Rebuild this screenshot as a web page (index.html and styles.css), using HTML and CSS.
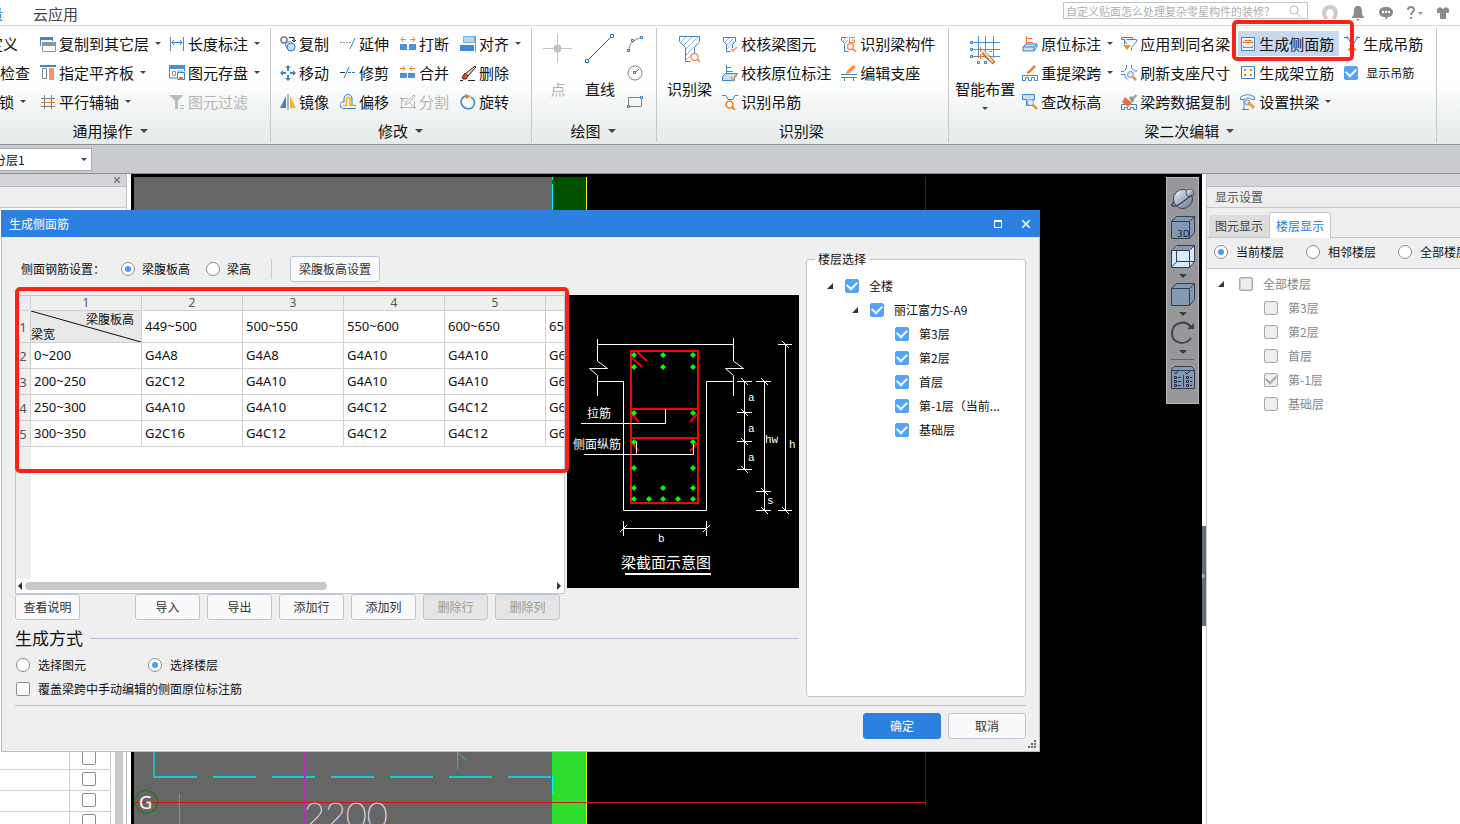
FILE: index.html
```html
<!DOCTYPE html>
<html lang="zh-CN">
<head>
<meta charset="utf-8">
<title>生成侧面筋</title>
<link rel="stylesheet" href="styles.css">
</head>
<body>
<header class="topbar">
  <nav class="tabs">
    <a class="tab tab-cut" href="#">量</a>
    <a class="tab" href="#">云应用</a>
  </nav>
  <div class="top-tools">
    <div class="search">
      <input class="search-input" type="text" aria-label="搜索" placeholder="自定义贴面怎么处理复杂零星构件的装修？">
      <svg width="12" height="12" viewBox="0 0 12 12" fill="none" stroke="#b9b9b9"><circle cx="5" cy="5" r="4"/><path d="M8 8l4 4"/></svg>
    </div>
    <button class="top-btn" aria-label="用户"><svg width="16" height="16" viewBox="0 0 16 16"><circle cx="8" cy="8" r="8" fill="#ccc"/><path d="M3 16c0-2 3-2 3-4-3-2-2-8 2-8s5 6 2 8c0 2 3 2 3 4z" fill="#fff"/></svg></button>
    <button class="top-btn" aria-label="通知"><svg width="14" height="16" viewBox="0 0 14 16" fill="#8c8c8c"><path d="M7 1c3 0 4 2 4 5 0 4 1 5 2 6v1H1v-1c1-1 2-2 2-6 0-3 1-5 4-5zM5 14h4l-2 2z"/></svg></button>
    <button class="top-btn" aria-label="消息"><svg width="16" height="16" viewBox="0 0 16 16"><path d="M8 2c4 0 7 2 7 5s-2 5-5 5l-2 3-1-3c-4 0-6-2-6-5s3-5 7-5z" fill="#8c8c8c"/><path d="M4 7h2M7 7h2M10 7h2" stroke="#fff" stroke-width="2"/></svg></button>
    <button class="top-btn" aria-label="帮助"><svg width="16" height="16" viewBox="0 0 16 16"><path d="M1 5c0-4 6-4 6 0 0 2-3 2-3 5M4 12v2" fill="none" stroke="#8c8c8c" stroke-width="2"/><path d="M11 7h5l-2.500 3z" fill="#999"/></svg></button>
    <button class="top-btn" aria-label="皮肤"><svg width="14" height="16" viewBox="0 0 14 16"><path d="M4 2l3 2 3-2 3 2v4h-3v6H4V8H1V4z" fill="#8c8c8c"/></svg></button>
  </div>
</header>

<section class="ribbon" aria-label="功能区">
  <div class="group group-general">
    <div class="group-body">
      <div class="col col-cut">
        <button class="item item-define">定义</button>
        <button class="item">检查</button>
        <button class="item item-lock">锁<i class="caret"></i></button>
      </div>
      <div class="col">
        <button class="item"><svg class="ico" viewBox="0 0 16 16"><path d="M.5 10V1.500h12V5" fill="#fff" stroke="#3c84cf"/><path d="M0 1h13v3H0z" fill="#3c84cf"/><path d="M2.500 6.500h13v9h-13z" fill="#fff" stroke="#8a97a0"/><path d="M2 6h14v4H2z" fill="#8a97a0"/></svg>复制到其它层<i class="caret"></i></button>
        <button class="item"><svg class="ico" viewBox="0 0 16 16"><path d="M0 1h16" stroke="#3c84cf" stroke-width="2"/><path d="M2.500 3.500h4v10h-4z" fill="#fff" stroke="#7c8890"/><path d="M9 3h5v12H9z" fill="#fb9266"/></svg>指定平齐板<i class="caret"></i></button>
        <button class="item"><svg class="ico" viewBox="0 0 16 16" stroke="#76838c" fill="none"><path d="M4.500 1v14M11.500 1v14M1 4.500h14M1 12.500h14"/><path d="M1 8.500h14" stroke="#ed7b24"/></svg>平行辅轴<i class="caret"></i></button>
      </div>
      <div class="col">
        <button class="item"><svg class="ico" viewBox="0 0 16 16"><path d="M1.500 1v14M14.500 1v14" stroke="#76838c"/><path d="M3 6.500h10M5 4L3 6.500 5 9M11 4l2 2.500L11 9" fill="none" stroke="#2c7ad0"/></svg>长度标注<i class="caret"></i></button>
        <button class="item"><svg class="ico" viewBox="0 0 16 16"><path d="M.5 1v12H8M15.500 1v5" fill="none" stroke="#3c84cf"/><path d="M0 0h16v4H0z" fill="#4c91dc"/><path d="M3.500 6.500h3v4h-3zM8 6h6" fill="none" stroke="#8d9aa3"/><path d="M8.500 7.500h7v7h-7z" fill="#fff" stroke="#3c84cf"/><path d="M10 12h4v3h-4z" fill="#ed6d24"/></svg>图元存盘<i class="caret"></i></button>
        <button class="item" disabled><svg class="ico" viewBox="0 0 16 16" fill="#bdbdbd"><path d="M0 1h14L9 7v8H6V7zM11 11h4v1h-4zM11 14h4v1h-4z"/></svg>图元过滤</button>
      </div>
    </div>
    <button class="group-label">通用操作<i class="caret caret-lg"></i></button>
  </div>

  <div class="group group-modify">
    <div class="group-body">
      <div class="col">
        <button class="item"><svg class="ico" viewBox="0 0 16 16" fill="none"><circle cx="4" cy="4" r="3" stroke="#777" stroke-width="1.500"/><path d="M9 1.500h5V5M12 4l2 2 2-2" stroke="#111"/><circle cx="9" cy="9" r="3.500" stroke="#3c84cf"/><circle cx="11" cy="11" r="4" fill="#bfe3f7" stroke="#2879c8"/></svg>复制</button>
        <button class="item"><svg class="ico" viewBox="0 0 16 16" fill="#3c84cf"><path d="M8 0l3 3H9v3H7V3H5zM8 16l3-3H9v-3H7v3H5zM0 8l3-3v2h3v2H3v2zM16 8l-3-3v2h-3v2h3v2z"/></svg>移动</button>
        <button class="item"><svg class="ico" viewBox="0 0 16 16"><path d="M6 2v12H0z" fill="#3c84cf"/><path d="M10 2v12h6z" fill="#fcb223"/><path d="M8 0v16" stroke="#6b7880"/></svg>镜像</button>
      </div>
      <div class="col">
        <button class="item"><svg class="ico" viewBox="0 0 16 16" fill="none"><path d="M0 6.500h12" stroke="#8795a0" stroke-dasharray="2 1"/><path d="M15 2l-5 11" stroke="#3c84cf"/></svg>延伸</button>
        <button class="item"><svg class="ico" viewBox="0 0 16 16" fill="none"><path d="M0 7.500h5" stroke="#333"/><path d="M9 2L4 13" stroke="#2879c8"/><path d="M8 7.500h8" stroke="#2879c8" stroke-dasharray="3 1"/></svg>修剪</button>
        <button class="item"><svg class="ico" viewBox="0 0 16 16" fill="none"><path d="M16 11.500h-4V5c0-6-8-6-8 0v3C0 8 0 10 .5 12c.5 2 1.500 2.500 3 2.500H16" stroke="#2879c8"/><path d="M3 11.500h3.500V5c0-2.500 3.500-2.500 3.500 0v6.500h5" stroke="#f6a81c" stroke-width="1.500"/></svg>偏移</button>
      </div>
      <div class="col">
        <button class="item"><svg class="ico" viewBox="0 0 16 16"><path d="M0 8h7v6H0zM9 8h7v6H9z" fill="#4c91dc"/><path d="M6 3.500H1M3 1L1 3.500 3 6M10 3.500h5M13 1l2 2.500L13 6" fill="none" stroke="#e98a1e"/></svg>打断</button>
        <button class="item"><svg class="ico" viewBox="0 0 16 16"><path d="M0 8h7v5H0zM8 8h7v5H8z" fill="#4c91dc"/><path d="M0 3.500h5M3 1l2 2.500L3 6M15 3.500h-5M12 1l-2 2.500L12 6" fill="none" stroke="#e98a1e"/></svg>合并</button>
        <button class="item" disabled><svg class="ico" viewBox="0 0 16 16" fill="none" stroke="#b5b5b5"><path d="M1.500 3v12M0 4.500h8M0 13.500h16M14.500 7v8M5 11l2-4 7-6 1 1-6 7zM2 5l3 3M10 9l4 4"/></svg>分割</button>
      </div>
      <div class="col">
        <button class="item"><svg class="ico" viewBox="0 0 16 16"><path d="M3.500.5h11v6h-11z" fill="#b6d5f6" stroke="#78abe2"/><path d="M0 9h14v6H0z" fill="#4088d8"/><path d="M15.500 0v16" stroke="#8d9aa3"/></svg>对齐<i class="caret"></i></button>
        <button class="item"><svg class="ico" viewBox="0 0 16 16"><path d="M15 1l1 1-8 9-3-2z" fill="#e8d5a0" stroke="#222"/><path d="M8 11l-2 3H3l-1-2 3-4z" fill="#d34b1c" stroke="#622"/><path d="M0 15.500h3M8 15.500h7" stroke="#222"/></svg>删除</button>
        <button class="item"><svg class="ico" viewBox="0 0 16 16"><path d="M6 2C1 3 0 8 2 11c3 5 10 5 12 0 1-3 0-6-3-8" fill="none" stroke="#3c84cf" stroke-width="1.500"/><path d="M5 0l6 2-5 3z" fill="#f07c20"/></svg>旋转</button>
      </div>
    </div>
    <button class="group-label">修改<i class="caret caret-lg"></i></button>
  </div>

  <div class="group group-draw">
    <div class="group-body">
      <button class="big" disabled><svg width="30" height="34" viewBox="0 0 30 34"><path d="M14.500 3v29M0 17.500h29" stroke="#c4c4c4"/><circle cx="14.500" cy="17.500" r="4" fill="#c4c4c4"/></svg>点</button>
      <button class="big"><svg width="30" height="34" viewBox="0 0 30 34"><path d="M3 29L26 6" stroke="#555"/><path d="M.5 28.500h3v3h-3zM25.500 3.500h3v3h-3z" fill="#fff" stroke="#2879c8"/></svg>直线</button>
      <div class="col col-shapes">
        <button class="item" aria-label="弧"><svg class="ico" viewBox="0 0 16 16" fill="none"><path d="M2 14C2 8 7 3 14 2" stroke="#76838c"/><path d="M.5 13.500h2v2h-2zM4.500 3.500h2v2h-2zM13.500.5h2v2h-2z" fill="#fff" stroke="#2879c8"/></svg></button>
        <button class="item" aria-label="圆"><svg class="ico" viewBox="0 0 16 16" fill="none"><circle cx="8" cy="8" r="7" stroke="#76838c"/><path d="M8 8l4-4" stroke="#2879c8"/><path d="M6.500 6.500h2v2h-2z" fill="#fff" stroke="#2879c8"/></svg></button>
        <button class="item" aria-label="矩形"><svg class="ico" viewBox="0 0 16 16" fill="none"><path d="M1.500 3.500h13v9h-13z" stroke="#76838c"/><path d="M.5 11.500h2v2h-2zM13.500 2.500h2v2h-2z" fill="#fff" stroke="#2879c8"/></svg></button>
      </div>
    </div>
    <button class="group-label">绘图<i class="caret caret-lg"></i></button>
  </div>

  <div class="group group-detect">
    <div class="group-body">
      <button class="big"><svg width="30" height="34" viewBox="0 0 30 34" fill="none"><path d="M4.500 5.500h20v5l-5 6V22M10.500 30.500v-14l-6-6v-5M10.500 30.500h5" stroke="#3c84cf"/><path d="M6 11l5-5M9 14l8-8M11 18L23 6M11 24l8-8M11 29l5-5" stroke="#8cb7e6"/><circle cx="19.500" cy="26" r="3.500" stroke="#fb9266" stroke-width="1.500"/><path d="M22 28l3 3" stroke="#fb9266" stroke-width="2"/></svg>识别梁</button>
      <div class="col">
        <button class="item"><svg class="ico" viewBox="0 0 16 16" fill="none"><path d="M1.500 1.500h12v4l-3 3V12M4.500 15.500V8.500l-3-3v-4M4.500 15.500h4" stroke="#3c84cf"/><path d="M3 6l4-4M5 9l6-6M5 13l7-8" stroke="#8cb7e6"/><path d="M9 13l2 2 4-4" stroke="#fb9266" stroke-width="1.500"/></svg>校核梁图元</button>
        <button class="item"><svg class="ico" viewBox="0 0 16 16"><path d="M4.500 0v9M5 2.500h4M5 6.500h6" stroke="#3c84cf" fill="none"/><path d="M.5 11.500l3-3h12l-3 3v4H.5z" fill="#c9dff6" stroke="#3c84cf"/><path d="M9 12l2 3 4-5" fill="none" stroke="#fb9266" stroke-width="1.500"/></svg>校核原位标注</button>
        <button class="item"><svg class="ico" viewBox="0 0 16 16" fill="none"><path d="M0 1.500h4l2 4h5l2-4h3" stroke="#3c84cf"/><circle cx="7.500" cy="10.500" r="3.500" stroke="#f57e20" stroke-width="1.500"/><path d="M10 13l3 3" stroke="#f57e20" stroke-width="2"/></svg>识别吊筋</button>
      </div>
      <div class="col">
        <button class="item"><svg class="ico" viewBox="0 0 16 16" fill="none"><path d="M.5 1.500h6M3.500 15.500V7.500l-3-3v-3M3.500 15.500h4" stroke="#3c84cf"/><path d="M2 5l4-4M3 9l4-5" stroke="#8cb7e6"/><path d="M14 1.500H8.500v5h5V4H11" stroke="#f57e20"/><circle cx="9.500" cy="10.500" r="3" stroke="#fb9266" stroke-width="1.500"/><path d="M12 13l3 3" stroke="#fb9266" stroke-width="2"/></svg>识别梁构件</button>
        <button class="item"><svg class="ico" viewBox="0 0 16 16"><path d="M0 9.500h16M0 12.500h16M3.500 12v4M12.500 12v4" stroke="#3c84cf"/><path d="M12 0l3 2-6 6-4 1 1-3z" fill="#fb9248"/></svg>编辑支座</button>
      </div>
    </div>
    <div class="group-label">识别梁</div>
  </div>

  <div class="group group-secondary">
    <div class="group-body">
      <button class="big"><svg width="30" height="34" viewBox="0 0 30 34" fill="none"><path d="M8.500 5v22M15.500 5v22M23.500 5v22M2 11.500h28M2 18.500h28M2 25.500h28" stroke="#4c91dc"/><path d="M.5 10.500h2v2h-2zM.5 17.500h2v2h-2zM.5 24.500h2v2h-2zM7.500 30.500h2v2h-2zM14.500 30.500h2v2h-2z" fill="#fff" stroke="#2879c8"/><path d="M13 21l11 11" stroke="#bd692e" stroke-width="4"/><path d="M13 20l10 11" stroke="#ffd9a6" stroke-width="2"/><path d="M10.500 16v5M8 18.500h5M10.500 23v5M8 25.500h5M19 20.500h3" stroke="#ed6d24"/></svg>智能布置<i class="caret"></i></button>
      <div class="col">
        <button class="item"><svg class="ico" viewBox="0 0 16 16" fill="none"><path d="M4.500 0v9M5 2.500h5M5 6.500h6" stroke="#f0712b"/><path d="M1 11l3-3h11v3l-3 4H1z" fill="#c9dff6" stroke="#3c84cf"/><path d="M1 11h11v4M12 11l3-3" stroke="#3c84cf"/></svg>原位标注<i class="caret"></i></button>
        <button class="item"><svg class="ico" viewBox="0 0 16 16" fill="none"><path d="M.5 15.500v-5h15v5h-3v-3h-3v3h-3v-3h-3v3z" stroke="#3c84cf"/><path d="M13 1L7 7l-2 1" stroke="#f57e20" stroke-width="2.500"/></svg>重提梁跨<i class="caret"></i></button>
        <button class="item"><svg class="ico" viewBox="0 0 16 16"><path d="M.5.5h12v5h-2v6h-6v-6h-4z" fill="#c9dff6" stroke="#3c84cf"/><circle cx="8.500" cy="8.500" r="3" fill="#e8f1fb" stroke="#7494ca"/><path d="M11 11l4 4" stroke="#ed941d" stroke-width="2.500"/></svg>查改标高</button>
      </div>
      <div class="col">
        <button class="item"><svg class="ico" viewBox="0 0 16 16" fill="none"><path d="M3.500 3.500h-3v-2h11v2M3.500 3.500v5M5.500 3.500h10v2l-5 6v3M3 4l3 4" stroke="#3c84cf"/><path d="M2 9h8l-4 5z" fill="#f19621"/></svg>应用到同名梁</button>
        <button class="item"><svg class="ico" viewBox="0 0 16 16" fill="none"><path d="M5.500 0v3l-2 3M10.500 0v3l3 3H16M0 9.500h4v2l2 3M0 6.500h3" stroke="#3c84cf"/><circle cx="9.500" cy="9.500" r="3" fill="#dce9fb" stroke="#6388c6"/><path d="M12 12l3 3" stroke="#ed941d" stroke-width="2.500"/></svg>刷新支座尺寸</button>
        <button class="item"><svg class="ico" viewBox="0 0 16 16"><path d="M.5 15.500v-5h15v5h-3v-2h-3v2h-3v-2h-3v2z" fill="none" stroke="#3c84cf"/><path d="M4 3l7 6-4 4-6-5z" fill="#ef702a"/><path d="M8 4l2-2 2 1 3-3 1 2-3 3v2l-2 2z" fill="#8c9ba6"/></svg>梁跨数据复制</button>
      </div>
      <div class="col">
        <div class="marked">
          <button class="item item-active"><svg class="ico" viewBox="0 0 16 16" fill="none"><path d="M1.500 1.500h13v13h-13z" fill="#eef4fb" stroke="#3c84cf"/><path d="M3 6.500l2-2h6l2 2M3 6.500h10M3 11.500h10M3 9.500l1 2M13 9.500l-1 2" stroke="#f06b2a"/></svg>生成侧面筋</button>
          <span class="mark mark-button"></span>
        </div>
        <button class="item"><svg class="ico" viewBox="0 0 16 16"><path d="M1.500 1.500h13v12h-13z" fill="#fff" stroke="#3c84cf"/><path d="M4 4h2v2H4zM10 4h2v2h-2zM4 9h2v2H4zM10 9h2v2h-2z" fill="#f06b2a"/></svg>生成架立筋</button>
        <button class="item"><svg class="ico" viewBox="0 0 16 16" fill="none"><path d="M.5 5.500V3c4-3 10-3 14 0v2.500h-3c-2-2-5-2-7 0zM4 6v9.500M2 15.500h7" stroke="#3c84cf"/><circle cx="7.500" cy="8.500" r="2.500" stroke="#6388c6"/><path d="M8 8l6 6" stroke="#e3a23c" stroke-width="3"/></svg>设置拱梁<i class="caret"></i></button>
      </div>
      <div class="col">
        <button class="item"><svg class="ico" viewBox="0 0 16 16" fill="none"><path d="M0 1.500h4l3 6h3l3-6h3M3 0v3M13 0v3" stroke="#3c84cf"/><path d="M8 9v4M4 14h8l-4-4z" stroke="#f06b2a" fill="#f5853e"/></svg>生成吊筋</button>
        <label class="item item-check"><input class="check" type="checkbox" checked>显示吊筋</label>
      </div>
    </div>
    <button class="group-label">梁二次编辑<i class="caret caret-lg"></i></button>
  </div>
</section>

<div class="strip">
  <div class="layer">
    <select class="layer-select" aria-label="分层"><option>分层1</option></select>
    <i class="caret"></i>
  </div>
</div>

<main class="workspace">
  <aside class="left-panel">
    <div class="panel-cap"><button class="panel-close" aria-label="关闭"><svg width="6" height="6" viewBox="0 0 6 6"><path d="M0 0l6 6M6 0L0 6" stroke="#777" stroke-width="1.500"/></svg></button></div>
    <div class="panel-tools"></div>
    <div class="props-wrap">
      <table class="props">
        <tr><td></td><td><input class="check" type="checkbox" aria-label="附加1"></td></tr>
        <tr><td></td><td><input class="check" type="checkbox" aria-label="附加2"></td></tr>
        <tr><td></td><td><input class="check" type="checkbox" aria-label="附加3"></td></tr>
        <tr><td></td><td><input class="check" type="checkbox" aria-label="附加4"></td></tr>
      </table>
      <div class="props-scroll"></div>
    </div>
  </aside>

  <section class="canvas" aria-label="绘图区">
    <svg class="drawing" width="1071" height="650" viewBox="0 0 1071 650" fill="none">
      <path d="M3 3h418v647H3z" fill="#666"/>
      <path d="M421 3h34v400h-34z" fill="#005000"/>
      <path d="M421 403h34v247h-34z" fill="#2cdf2c"/>
      <path d="M421.500 3v3M421.500 10v26M421.500 602v18" stroke="#00f6f6"/>
      <path d="M455.500 3v647" stroke="#fff000"/>
      <path d="M794.500 3v629" stroke="#8b0000"/>
      <path d="M23 500v104" stroke="#2cb4b8" stroke-width="2"/>
      <path d="M23 603h398" stroke="#23c3c9" stroke-width="2" stroke-dasharray="43 16"/>
      <path d="M174 500v150" stroke="#b030b8" stroke-width="2"/>
      <path d="M326.500 570v25M327 579l8 7M48.500 620v30" stroke="#22d622"/>
      <path d="M3 628.500h792" stroke="#d01414"/>
      <path d="M15 616l8 3 4 8-3 9-9 4-8-4-4-9 4-8z" stroke="#117a11"/>
      <text class="axis-text" x="8" y="635">G</text>
      <text class="dim-text" x="173" y="654">2200</text>
    </svg>
    <div class="palette">
      <button class="pal" aria-label="动态观察"><svg width="24" height="24" viewBox="0 0 24 24"><defs><linearGradient id="ball" x2="1" y2="1"><stop stop-color="#f4f7fa"/><stop offset="1" stop-color="#5a7290"/></linearGradient></defs><circle cx="12" cy="12" r="9.500" fill="url(#ball)" stroke="#3b4858"/><circle cx="19" cy="6" r="4" fill="url(#ball)" stroke="#506276"/><path d="M3 15c-5 4 0 6 6 2L21 8" fill="none" stroke="#3b4858" stroke-width="1.500"/></svg></button>
      <button class="pal" aria-label="三维"><svg width="24" height="24" viewBox="0 0 24 24"><path d="M.5 5.500l5-5h18v16l-5 6H.5z" fill="#8398b2" stroke="#333e4d"/><path d="M.5 5.500h18v17M18.500 5.500l5-5" fill="none" stroke="#333e4d"/><text class="pal-text" x="6" y="21">3D</text></svg></button>
      <button class="pal" aria-label="线框"><svg width="24" height="24" viewBox="0 0 24 24"><path d="M.5 5.500l5-5h18v16l-5 6H.5z" fill="#d6eafc" stroke="#333e4d"/><path d="M1 5l5-4h17l-5 4z" fill="#8398b2"/><path d="M.5 5.500h18v17M18.500 5.500l5-5M5.500 5v12l-5 5M5.500 16.500h18" fill="none" stroke="#333e4d"/></svg></button>
      <i class="caret caret-lg"></i>
      <button class="pal" aria-label="视图"><svg width="24" height="24" viewBox="0 0 24 24"><path d="M.5 5.500l5-5h18v16l-5 6H.5z" fill="#8398b2" stroke="#333e4d"/><path d="M.5 5.500h18v17M18.500 5.500l5-5" fill="none" stroke="#333e4d"/></svg></button>
      <i class="caret caret-lg"></i>
      <button class="pal" aria-label="旋转视图"><svg width="24" height="24" viewBox="0 0 24 24"><path d="M20 6C14-2 1 2 1 12c0 11 14 13 19 5" fill="none" stroke="#3b4654" stroke-width="2"/><path d="M16 8h7V2z" fill="#3b4654"/></svg></button>
      <i class="caret caret-lg"></i>
      <hr class="pal-rule">
      <button class="pal" aria-label="显示设置"><svg width="24" height="24" viewBox="0 0 24 24"><path d="M.5 3.500l3-3h17l3 3v19H.5z" fill="#8398b2" stroke="#333e4d"/><path d="M0 4.500h24M12.500 9v12" stroke="#333e4d"/><path d="M3 6l2 2 2-3M14 6l2 2 3-3M3.500 10.500h2v2h-2zM3.500 14.500h2v2h-2zM3.500 18.500h2v2h-2zM15.500 10.500h2v2h-2zM15.500 14.500h2v2h-2zM15.500 18.500h2v2h-2zM7 11.500h3M7 15.500h3M7 19.500h3M19 11.500h2M19 15.500h2M19 19.500h2" fill="none" stroke="#222b36"/></svg></button>
    </div>
  </section>

  <div class="splitter"><button class="splitter-grip" aria-label="收起面板"></button></div>

  <aside class="right-panel">
    <div class="panel-cap"></div>
    <h2 class="panel-title">显示设置</h2>
    <div class="panel-tabs">
      <button class="panel-tab">图元显示</button>
      <button class="panel-tab panel-tab-on">楼层显示</button>
    </div>
    <div class="floor-scope">
      <label class="opt"><input class="radio" type="radio" name="scope" checked>当前楼层</label>
      <label class="opt"><input class="radio" type="radio" name="scope">相邻楼层</label>
      <label class="opt"><input class="radio" type="radio" name="scope">全部楼层</label>
    </div>
    <ul class="tree tree-muted">
      <li><i class="twisty"></i><label class="opt"><input class="check check-partial" type="checkbox" disabled>全部楼层</label>
        <ul>
          <li><label class="opt"><input class="check" type="checkbox" disabled>第3层</label></li>
          <li><label class="opt"><input class="check" type="checkbox" disabled>第2层</label></li>
          <li><label class="opt"><input class="check" type="checkbox" disabled>首层</label></li>
          <li><label class="opt"><input class="check" type="checkbox" checked disabled>第-1层</label></li>
          <li><label class="opt"><input class="check" type="checkbox" disabled>基础层</label></li>
        </ul>
      </li>
    </ul>
  </aside>
</main>

<section class="dialog" role="dialog" aria-labelledby="dialog-title">
  <header class="dialog-bar">
    <h1 class="dialog-title" id="dialog-title">生成侧面筋</h1>
    <button class="win-btn" aria-label="最大化"><svg width="8" height="8" viewBox="0 0 8 8"><path d="M.5 1v6.500h7V1" fill="none" stroke="#fff"/><path d="M0 1h8" stroke="#fff" stroke-width="2"/></svg></button>
    <button class="win-btn" aria-label="关闭"><svg width="8" height="8" viewBox="0 0 8 8"><path d="M0 0l8 8M8 0L0 8" stroke="#fff" stroke-width="1.500"/></svg></button>
  </header>
  <div class="dialog-body">
    <div class="dialog-cols">
      <div class="dialog-main">
        <div class="settings">
          <span class="settings-name">侧面钢筋设置：</span>
          <label class="opt"><input class="radio" type="radio" name="basis" checked>梁腹板高</label>
          <label class="opt"><input class="radio" type="radio" name="basis">梁高</label>
          <span class="rule-v"></span>
          <button class="btn btn-wide">梁腹板高设置</button>
        </div>
        <div class="sheet-row">
          <div class="sheet">
            <div class="sheet-view">
              <table class="grid">
                <colgroup><col class="c-num"><col class="c-first"><col class="c-val"><col class="c-val"><col class="c-val"><col class="c-val"><col class="c-val"></colgroup>
                <thead><tr><th class="corner"></th><th>1</th><th>2</th><th>3</th><th>4</th><th>5</th><th></th></tr></thead>
                <tbody>
                  <tr class="tall"><th>1</th><td class="diag"><svg class="diag-line" viewBox="0 0 110 31" preserveAspectRatio="none"><path d="M0 0l110 31" stroke="#111"/></svg><div class="diag-top">梁腹板高</div><div class="diag-bottom">梁宽</div></td><td>449~500</td><td>500~550</td><td>550~600</td><td>600~650</td><td>650~700</td></tr>
                  <tr><th>2</th><td>0~200</td><td>G4A8</td><td>G4A8</td><td>G4A10</td><td>G4A10</td><td>G6A10</td></tr>
                  <tr><th>3</th><td>200~250</td><td>G2C12</td><td>G4A10</td><td>G4A10</td><td>G4A10</td><td>G6A10</td></tr>
                  <tr><th>4</th><td>250~300</td><td>G4A10</td><td>G4A10</td><td>G4C12</td><td>G4C12</td><td>G6C12</td></tr>
                  <tr><th>5</th><td>300~350</td><td>G2C16</td><td>G4C12</td><td>G4C12</td><td>G4C12</td><td>G6C12</td></tr>
                </tbody>
              </table>
            </div>
            <div class="hscroll"><i class="arrow-l"></i><div class="hscroll-track"><div class="hscroll-thumb"></div></div><i class="arrow-r"></i></div>
            <span class="mark mark-sheet"></span>
          </div>
          <svg class="diagram" width="232" height="293" viewBox="0 0 232 293" fill="none" role="img" aria-label="梁截面示意图">
            <defs><marker id="bar" markerWidth="6" markerHeight="6" refX="3" refY="3" markerUnits="userSpaceOnUse"><path d="M3 0l3 3-3 3-3-3z" fill="#0f0"/></marker></defs>
            <path d="M0 0h232v293H0z" fill="#000"/>
            <g stroke="#fff">
              <path d="M30.500 44v22l10 7.500h-18l8 7V101M166.500 43v23l10 7.500h-18l8 7V101M30 49.500h136M30 86.500h26.500v129h83v-129H166"/>
              <path d="M177.500 86v89M170 86.500h15M170 117.500h15M170 146.500h15M170 174.500h15M197.500 86v130M189 86.500h15M189 196.500h15M189 215.500h15M218.500 49v167M211 49.500h14M211 215.500h14M56 233.500h84M56.500 226v15M139.500 226v15"/>
              <path d="M174 83l7 7M174 114l7 7M174 143l7 7M174 171l7 7M194 83l7 7M194 193l7 7M194 212l7 7M215 46l7 7M215 212l7 7M53 237l7-7M136 237l7-7"/>
            </g>
            <path d="M64 56h67v152H64zM64 114h67M64 143h67M70 57l10 9M65 63l10 9M65 119l7 8M130 119l-7 8M65 148l7 8M130 148l-7 8" stroke="#f00" stroke-width="2"/>
            <path d="M14 128.500h84.500V114M17 159.500h109.500V147M69.500 159v-13" stroke="#fff"/>
            <path class="bars" d="M67 60L96 60 126 60 126 72 96 72 67 72 67 118 126 118 126 147 67 147 67 173 126 173 126 193 96 193 67 193 67 204 82 204 96 204 111 204 126 204"/>
            <path d="M58 279h86" stroke="#fff" stroke-width="2"/>
            <g class="cad-text">
              <text x="20" y="123">拉筋</text><text x="6" y="154">侧面纵筋</text>
              <text class="cad-letter" x="181" y="106">a</text><text class="cad-letter" x="181" y="137">a</text><text class="cad-letter" x="181" y="166">a</text>
              <text class="cad-letter" x="198" y="148">hw</text><text class="cad-letter" x="222" y="153">h</text><text class="cad-letter" x="200" y="209">s</text><text class="cad-letter" x="91" y="247">b</text>
              <text class="cad-title" x="54" y="273">梁截面示意图</text>
            </g>
          </svg>
        </div>
        <div class="sheet-actions">
          <button class="btn btn-help">查看说明</button>
          <button class="btn">导入</button>
          <button class="btn">导出</button>
          <button class="btn">添加行</button>
          <button class="btn">添加列</button>
          <button class="btn" disabled>删除行</button>
          <button class="btn" disabled>删除列</button>
        </div>
        <h2 class="section-title">生成方式</h2>
        <div class="modes">
          <label class="opt"><input class="radio" type="radio" name="mode">选择图元</label>
          <label class="opt"><input class="radio" type="radio" name="mode" checked>选择楼层</label>
        </div>
        <div class="modes"><label class="opt"><input class="check" type="checkbox">覆盖梁跨中手动编辑的侧面原位标注筋</label></div>
      </div>
      <fieldset class="floors">
        <legend>楼层选择</legend>
        <ul class="tree">
          <li><i class="twisty"></i><label class="opt"><input class="check" type="checkbox" checked>全楼</label>
            <ul>
              <li><i class="twisty"></i><label class="opt"><input class="check" type="checkbox" checked>丽江富力S-A9</label>
                <ul>
                  <li><label class="opt"><input class="check" type="checkbox" checked>第3层</label></li>
                  <li><label class="opt"><input class="check" type="checkbox" checked>第2层</label></li>
                  <li><label class="opt"><input class="check" type="checkbox" checked>首层</label></li>
                  <li><label class="opt"><input class="check" type="checkbox" checked>第-1层（当前...</label></li>
                  <li><label class="opt"><input class="check" type="checkbox" checked>基础层</label></li>
                </ul>
              </li>
            </ul>
          </li>
        </ul>
      </fieldset>
    </div>
    <footer class="dialog-foot">
      <button class="btn btn-foot btn-primary">确定</button>
      <button class="btn btn-foot">取消</button>
    </footer>
  </div>
  <svg class="grip" width="8" height="8" viewBox="0 0 8 8" fill="#666d76"><path d="M6 0h2v2H6zM3 3h2v2H3zM6 3h2v2H6zM0 6h2v2H0zM3 6h2v2H3zM6 6h2v2H6z"/></svg>
</section>
</body>
</html>
```

FILE: styles.css
```css
* { box-sizing: border-box; }
html, body { height: 100%; }
body {
  margin: 0;
  display: flex;
  flex-direction: column;
  position: relative;
  overflow: hidden;
  background: #fff;
  color: #111;
  font: 12px/16px "Noto Sans CJK SC", "Noto Sans", sans-serif;
}
button, input, select { font: inherit; color: inherit; margin: 0; }
button { background: none; border: 0; padding: 0; white-space: nowrap; }
svg { display: block; flex: none; }
ul { list-style: none; margin: 0; padding: 0; }
h1, h2 { margin: 0; font-size: 12px; font-weight: 400; }

.caret {
  flex: none;
  width: 0;
  height: 0;
  border: 3px solid transparent;
  border-top-color: #444;
  border-bottom: 0;
}
.caret-lg { border-width: 4px 4px 0; }

/* form controls */
.check, .radio {
  appearance: none;
  flex: none;
  width: 14px;
  height: 14px;
  border: 1px solid #8c8c8c;
  border-radius: 2px;
  background: #fff;
  display: grid;
  place-items: center;
}
.radio { border-radius: 50%; }
.radio:checked::before {
  content: "";
  width: 6px;
  height: 6px;
  border-radius: 50%;
  background: #4a9cf8;
}
.check:checked { background: #55a2fa; border-color: #55a2fa; }
.check:checked::before {
  content: "";
  width: 8px;
  height: 5px;
  margin-bottom: 3px;
  border: solid #fff;
  border-width: 0 0 2px 2px;
  transform: rotate(-45deg);
}
.check:disabled { background: #eee; border-color: #aaa; }
.check:disabled:checked::before { border-color: #aaa; }
.check-partial::before { content: ""; width: 10px; height: 10px; border: 1px solid #ccc; }
.opt { display: flex; align-items: center; gap: 8px; white-space: nowrap; }

/* top bar */
.topbar {
  flex: none;
  height: 26px;
  display: flex;
  justify-content: space-between;
  border-bottom: 1px solid #d8d8d8;
}
.tabs { display: flex; gap: 30px; margin-left: -12px; }
.tab { color: #444; text-decoration: none; font-size: 15px; line-height: 28px; }
.tab-cut { color: #2c6ba8; }
.top-tools { display: flex; align-items: flex-start; gap: 13px; padding: 2px 10px 0 0; }
.search {
  width: 245px;
  height: 17px;
  margin-right: 1px;
  display: flex;
  align-items: center;
  padding: 0 6px 0 2px;
  border: 1px solid #c4c4c4;
}
.search-input { flex: 1; min-width: 0; border: 0; padding: 0; height: 15px; font-size: 11px; background: none; }
.search-input::placeholder { color: #b0b0b0; }
.top-btn { padding-top: 3px; }

/* ribbon */
.ribbon {
  flex: none;
  display: flex;
  height: 119px;
  margin-left: -50px;
  background: linear-gradient(#fff 45%, #e5eaea);
  border-bottom: 1px solid #8c8f94;
  font-size: 15px;
}
.group {
  display: flex;
  flex-direction: column;
  align-items: center;
  margin: 2px 0;
  padding-top: 3px;
  border-right: 1px solid #c6c9cb;
}
.group-body { display: flex; flex: 1; }
.col { display: flex; flex-direction: column; }
.item { display: flex; align-items: center; gap: 3px; height: 25px; margin-bottom: 4px; line-height: 25px; white-space: nowrap; }
.item .caret { margin-left: 3px; }
.item:disabled, .big:disabled { color: #b5b5b5; }
.ico { width: 16px; height: 16px; }
.item-check { font-size: 12px; gap: 8px; }
.item-active { background: #c8d8ee; padding: 0 5px 0 2px; margin-left: -2px; margin-right: -5px; }
.big { display: flex; flex-direction: column; align-items: center; height: 87px; line-height: 23px; }
.big svg { margin-bottom: 12px; }
.big .caret { margin-top: 7px; }
.group-label { display: flex; align-items: center; gap: 7px; height: 26px; line-height: 26px; }
.group-general { padding-right: 10px; }
.group-general .group-body { gap: 8px; }
.group-general .col-cut { width: 80px; align-items: flex-end; margin-right: 2px; }
.group-general .group-label { margin-left: 10px; }
.item-define { margin-right: 12px; }
.item-lock { margin-right: 4px; }
.group-modify { padding-left: 9px; padding-right: 10px; }
.group-modify .group-body { gap: 11px; }
.group-draw { padding-left: 11px; padding-right: 13px; }
.group-draw .group-body { gap: 12px; }
.group-detect { padding-left: 10px; padding-right: 13px; }
.group-detect .group-body { gap: 10px; }
.group-secondary { padding-left: 6px; padding-right: 13px; }
.group-secondary .group-body { gap: 8px; }
.group-secondary .big { margin-right: -1px; }
.group-secondary .col:nth-child(4), .group-secondary .col:nth-child(5) { margin-left: 2px; }
.marked { position: relative; }
.mark { position: absolute; border: 4px solid #ff2117; border-radius: 5px; pointer-events: none; z-index: 5; }
.mark-button { left: -8px; right: -20px; top: -11px; height: 41px; }

/* strip under ribbon */
.strip { flex: none; height: 29px; padding-top: 3px; background: #c9cbd0; border-bottom: 1px solid #8c8f94; }
.layer { position: relative; width: 92px; }
.layer-select {
  appearance: none;
  width: 100%;
  height: 23px;
  padding: 0;
  text-indent: -6px;
  border: 1px solid #a9abae;
  border-left: 0;
  border-radius: 0;
  background: #fff;
}
.layer .caret { position: absolute; right: 5px; top: 10px; }

/* workspace */
.workspace { flex: 1; min-height: 0; display: flex; }
.left-panel {
  flex: none;
  width: 127px;
  display: flex;
  flex-direction: column;
  border-right: 1px solid #c0c3ca;
  margin-right: 4px;
}
.panel-cap { flex: none; height: 13px; display: flex; justify-content: flex-end; padding-right: 6px; background: #d3d5da; border-bottom: 1px solid #bfc2c9; }
.panel-tools { flex: none; height: 21px; background: #eee; border-bottom: 1px solid #c8cbd0; }
.props-wrap { flex: 1; min-height: 0; display: flex; align-items: flex-end; gap: 4px; margin-top: 4px; overflow: hidden; }
.props { width: 111px; border-spacing: 0; margin-bottom: -9px; }
.props td { height: 21px; padding: 0; border-right: 1px solid #d0d0d0; border-bottom: 1px solid #d0d0d0; }
.props td:last-child { width: 41px; padding: 0 0 2px 12px; }
.props-scroll { width: 8px; align-self: stretch; background: #c9c9c9; }

.canvas { flex: 1; min-width: 0; position: relative; overflow: hidden; background: #000; }
.axis-text { font: 18px "Noto Sans", sans-serif; fill: #fff; }
.dim-text { font: 100 36px Lato, "Noto Sans", sans-serif; fill: #fff; stroke: #eee; stroke-width: 0.3; }
.palette {
  position: absolute;
  top: 3px;
  right: 3px;
  width: 33px;
  height: 227px;
  padding-top: 9px;
  display: flex;
  flex-direction: column;
  align-items: center;
  gap: 5px;
  background: #98989b;
  border: 1px solid #b9b9bb;
}
.palette .caret { border-top-color: #353c45; }
.pal { width: 24px; height: 24px; }
.pal-text { font: 9px "DejaVu Sans", sans-serif; fill: #1d2630; }
.pal-rule { width: 23px; margin: 0 0 1px; border: 0; border-top: 1px solid #666; }

.splitter { flex: none; width: 4px; display: flex; align-items: center; padding-top: 154px; }
.splitter-grip { width: 4px; height: 100px; background: #646c78; display: flex; align-items: center; }
.splitter-grip::before { content: ""; border: 3px solid transparent; border-left-color: #b9bec5; border-right: 0; }

.right-panel { flex: none; width: 254px; border-left: 1px solid #c3c6cc; overflow: hidden; }
.panel-title { height: 21px; padding-left: 8px; line-height: 19px; color: #555; background: #eee; border-bottom: 1px solid #c3c6cc; }
.panel-tabs { height: 30px; display: flex; align-items: flex-end; padding-left: 2px; background: #eee; border-bottom: 1px solid #c3c6cc; }
.panel-tab { height: 22px; padding: 0 6px; line-height: 22px; color: #444; background: #ddd; border-radius: 3px 3px 0 0; }
.panel-tab-on { height: 26px; margin-bottom: -1px; line-height: 24px; color: #2c80e0; background: #fff; border: 1px solid #c3c6cc; border-bottom: 0; }
.floor-scope { height: 31px; display: flex; gap: 22px; padding: 0 0 2px 7px; background: #efefef; border-bottom: 1px solid #c3c6cc; }

/* trees */
.tree li { position: relative; }
.tree .opt { height: 24px; gap: 10px; padding-left: 25px; }
.tree ul { padding-left: 25px; }
.twisty {
  position: absolute;
  left: 7px;
  top: 9px;
  width: 6px;
  height: 6px;
  background: #333;
  clip-path: polygon(100% 0, 100% 100%, 0 100%);
}
.tree-muted { padding: 3px 0 0 7px; color: #888; }
.tree-muted .twisty { left: 4px; }

/* dialog */
.dialog { position: absolute; left: 1px; top: 210px; width: 1039px; background: #efefef; border: 1px solid #b5c0d2; border-top: 0; z-index: 3; }
.dialog-bar { height: 27px; margin: 0 -1px; padding: 0 10px 0 8px; display: flex; align-items: center; gap: 20px; background: #2c80e0; color: #fff; }
.dialog-title { flex: 1; }
.dialog-body { padding: 14px 13px 12px; }
.dialog-cols { display: flex; gap: 7px; padding-bottom: 8px; border-bottom: 1px solid #bcc6d6; }
.dialog-main { flex: 1; min-width: 0; }
.settings { display: flex; align-items: center; padding: 5px 0 13px 6px; }
.settings .opt { margin-left: 16px; gap: 7px; }
.rule-v { width: 1px; height: 20px; margin: 0 18px 0 20px; background: #ccc; }
.btn {
  height: 26px;
  min-width: 65px;
  line-height: 24px;
  text-align: center;
  color: #333;
  background: #fafafa;
  border: 1px solid #bcc6d6;
  border-radius: 3px;
}
.btn:disabled { background: #e5e5e5; color: #999; }
.btn-wide { min-width: 90px; }
.btn-foot { min-width: 78px; }
.btn-primary { background: #2c80e0; border-color: #2c80e0; color: #fff; }

.sheet-row { display: flex; gap: 2px; align-items: flex-start; }
.sheet { position: relative; flex: 1; min-width: 0; height: 299px; display: flex; flex-direction: column; background: #fff; border: 1px solid #c4c8cf; }
.sheet-view { flex: 1; min-height: 0; overflow: hidden; background: linear-gradient(90deg, #efefef 15px, #fff 15px); }
.grid { width: 631px; table-layout: fixed; border-spacing: 0; font-family: "Noto Sans", "Noto Sans CJK SC", sans-serif; font-size: 13px; }
.c-num { width: 15px; }
.c-first { width: 111px; }
.c-val { width: 101px; }
.grid th, .grid td { height: 26px; padding: 0 0 2px 3px; border-right: 1px solid #d0d0d0; border-bottom: 1px solid #d0d0d0; text-align: left; line-height: 16px; }
.grid th { padding: 0; background: #efefef; color: #555; font-weight: 400; text-align: center; }
.grid thead th { height: 15px; line-height: 14px; font-size: 12px; }
.grid .corner { background: #e6edf6; }
.grid .tall td, .grid .tall th { height: 32px; }
.grid .diag { position: relative; padding: 0; background: #e8e8e8; font-size: 12px; line-height: 15px; }
.diag-line { position: absolute; inset: 0; width: 100%; height: 100%; }
.diag-top { text-align: right; padding-right: 7px; }
.hscroll { height: 14px; display: flex; align-items: center; padding: 0 3px 0 2px; gap: 3px; }
.hscroll-track { flex: 1; }
.hscroll-thumb { width: 302px; height: 8px; border-radius: 4px; background: #c9c9c9; }
.arrow-l, .arrow-r { border: 4px solid transparent; }
.arrow-l { border-right-color: #333; border-left: 0; }
.arrow-r { border-left-color: #333; border-right: 0; }
.mark-sheet { left: -1px; right: -5px; top: -9px; height: 186px; }

.bars { marker: url(#bar); }
.cad-text { font: 12px "Noto Sans CJK SC", sans-serif; fill: #fff; }
.cad-letter { font: 11px "Liberation Mono", monospace; }
.cad-title { font-size: 15px; }

.sheet-actions { display: flex; gap: 7px; }
.btn-help { margin-right: 48px; }
.section-title { display: flex; align-items: center; gap: 7px; margin-top: 8px; font-size: 17px; line-height: 20px; }
.section-title::after { content: ""; flex: 1; height: 1px; background: #bcc6d6; }
.modes { display: flex; gap: 62px; margin-top: 8px; padding-left: 1px; }
.section-title + .modes { margin-top: 9px; }
.floors { width: 220px; margin: 0; padding: 7px 8px; border: 1px solid #c3c6cc; border-radius: 3px; background: #fff; }
.floors legend { padding: 0 3px; }
.floors .tree { padding-left: 5px; }
.dialog-foot { display: flex; justify-content: flex-end; gap: 7px; padding-top: 7px; }
.grip { position: absolute; right: 3px; bottom: 3px; }
```
